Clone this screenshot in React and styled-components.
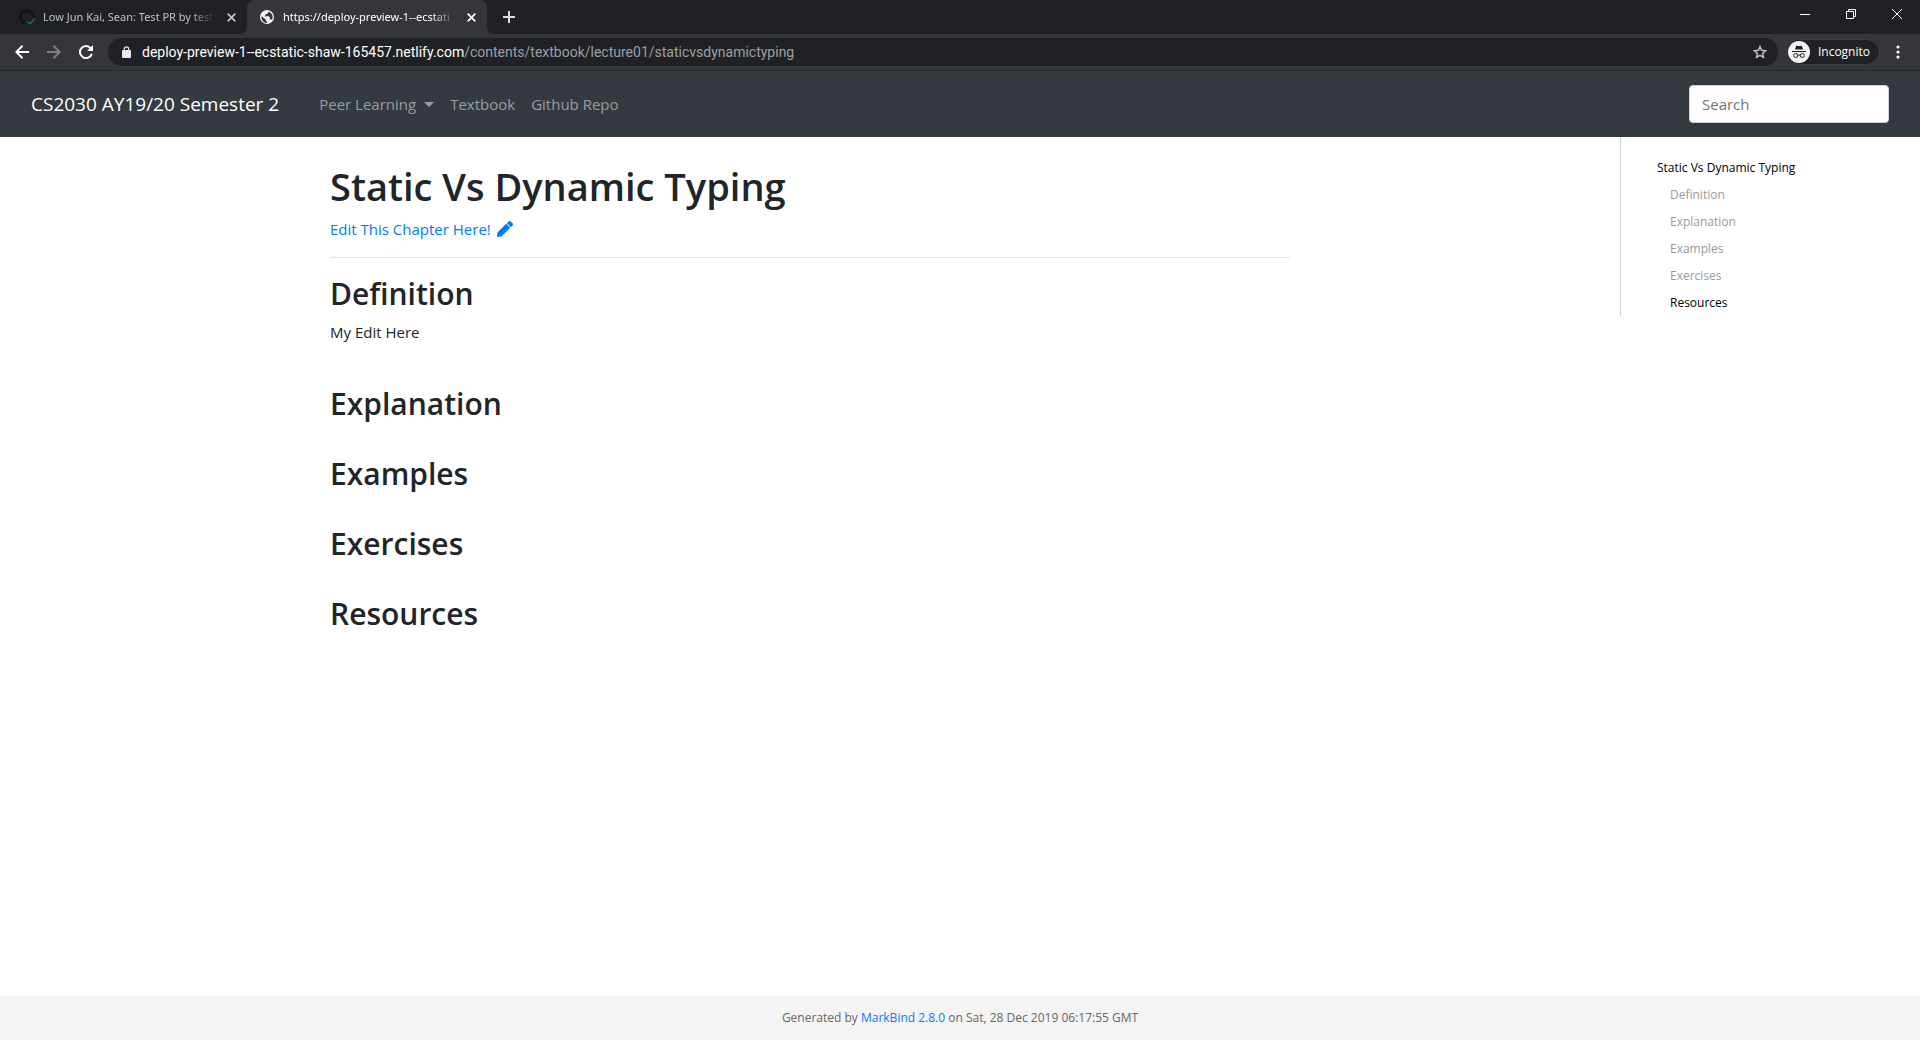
import React from "react";
import styled, { createGlobalStyle, css } from "styled-components";

const Global = createGlobalStyle`
  *, *::before, *::after { box-sizing: border-box; }
  body {
    margin: 0;
    background: #fff;
    color: #212529;
    font: 400 15px/24px "Open Sans", "Noto Sans", sans-serif;
  }
  button, input { font: inherit; }
  a { color: #007bff; text-decoration: none; }
  h1, h2, p, ul { margin: 0; padding: 0; }
`;

const Screen = styled.div`
  min-height: 100vh;
  display: flex;
  flex-direction: column;
`;

/* browser window */
const TabStrip = styled.div`
  display: flex;
  height: 34px;
  padding-left: 7px;
  background: #202124;
`;

const activeTab = css`
  position: relative;
  background: #35363a;
  color: #fff;

  /* the feet that curve out into the toolbar */
  &::before, &::after {
    content: "";
    position: absolute;
    bottom: 0;
    width: 8px;
    height: 8px;
  }
  &::before {
    right: 100%;
    background: radial-gradient(circle at 0 0, #202124 8px, #35363a 8px);
  }
  &::after {
    left: 100%;
    background: radial-gradient(circle at 100% 0, #202124 8px, #35363a 8px);
  }
`;

const Tab = styled.div`
  display: flex;
  align-items: center;
  gap: 8px;
  width: 240px;
  padding: 0 8px 0 12px;
  border-radius: 8px 8px 0 0;
  color: #bdc1c6;
  ${(p) => p.$active && activeTab}
`;

const TabTitle = styled.span`
  flex: 1;
  white-space: nowrap;
  font-family: "Noto Sans", sans-serif;
  font-size: 11px;
  line-height: 16px;
  mask-image: linear-gradient(to right, #000 calc(100% - 24px), transparent);
`;

const IconButton = styled.button`
  display: flex;
  align-items: center;
  justify-content: center;
  width: ${(p) => p.$w || 32}px;
  padding: 0;
  border: 0;
  background: transparent;
  color: ${(p) => p.$color || "#fff"};
`;

const WindowControls = styled.div`
  display: flex;
  align-items: stretch;
  height: 28px;
  margin-left: auto;
`;

const Toolbar = styled.div`
  display: flex;
  align-items: center;
  height: 37px;
  padding: 0 6px;
  background: #35363a;
  border-bottom: 1px solid #27282b;
`;

const AddressBar = styled.div`
  flex: 1;
  display: flex;
  align-items: center;
  gap: 11px;
  height: 28px;
  margin: 0 8px 0 6px;
  padding: 0 9px 0 14px;
  border-radius: 14px;
  background: #202124;
`;

const Url = styled.span`
  flex: 1;
  font-family: Roboto, "Noto Sans", sans-serif;
  font-size: 14px;
  line-height: 20px;
  color: #9aa0a6;
  white-space: nowrap;
`;

const Host = styled.span`
  color: #fff;
`;

const Profile = styled.button`
  display: flex;
  align-items: center;
  gap: 8px;
  height: 26px;
  margin-right: 2px;
  padding: 0 9px 0 1px;
  border: 1px solid #3c4043;
  border-radius: 13px;
  background: #202124;
  color: #fff;
  font-size: 12px;
  line-height: 16px;
`;

/* site */
const Navbar = styled.nav`
  display: flex;
  align-items: center;
  height: 66px;
  padding: 0 31px;
  background: #343a40;
`;

const Brand = styled.a`
  margin-right: 32px;
  color: #fff;
  font-size: 19px;
  line-height: 30px;
`;

const NavList = styled.ul`
  display: flex;
  list-style: none;
`;

const navItem = css`
  display: flex;
  align-items: center;
  gap: 8px;
  padding: 8px;
  border: 0;
  background: transparent;
  color: #999c9f;
  line-height: 24px;
`;

const NavLink = styled.a`${navItem}`;
const NavMenu = styled.button`${navItem}`;

const Search = styled.input`
  width: 200px;
  height: 38px;
  margin-left: auto;
  padding: 6px 12px;
  border: 1px solid #ced4da;
  border-radius: 4px;
  background: #fff;
  &::placeholder { color: #6c757d; opacity: 1; }
`;

const Body = styled.div`
  flex: 1;
  display: flex;
  align-items: flex-start;
`;

const Main = styled.main`
  flex: 1;
  display: flex;
  justify-content: center;
  padding: 24px 0;
`;

const Article = styled.article`
  width: 100%;
  max-width: 960px;
`;

const Title = styled.h1`
  margin-bottom: 6px;
  font-size: 38px;
  line-height: 50px;
  font-weight: 600;
`;

const EditLink = styled.a`
  display: inline-flex;
  align-items: center;
  gap: 6px;
  vertical-align: top;
`;

const Rule = styled.hr`
  margin: 16px 0;
  border: 0;
  border-top: 1px solid #e5e5e5;
`;

const Section = styled.section`
  min-height: ${(p) => (p.$filled ? 110 : 70)}px;
`;

const Heading = styled.h2`
  margin-bottom: 6px;
  font-size: 30px;
  line-height: 40px;
  font-weight: 600;
`;

const PageNav = styled.nav`
  display: flex;
  flex-direction: column;
  width: 300px;
  padding: 17px 0 0 36px;
  border-left: 1px solid #ced4da;
`;

const PageNavLink = styled.a`
  padding: 4px 0 4px ${(p) => (p.$child ? 13 : 0)}px;
  color: ${(p) => (p.$on ? "#000" : "#999")};
  font-size: 12px;
  line-height: 19px;
`;

const Footer = styled.footer`
  padding: 12px 0;
  background: #f4f4f4;
  color: #666;
  font-size: 12px;
  line-height: 20px;
  text-align: center;
`;

const Close = () => (
  <svg width="9" height="9" viewBox="0 0 9 9" stroke="currentColor" strokeWidth="1.700" fill="none">
    <path d="M.7 .7l7.600 7.600M8.300 .7L.7 8.300" />
  </svg>
);

const sections = ["Definition", "Explanation", "Examples", "Exercises", "Resources"];

export default function App() {
  return (
    <Screen>
      <Global />
      <header>
        <TabStrip>
          <Tab>
            <svg width="16" height="16" viewBox="0 0 16 16">
              <path fill="#111315" d="M8 0C3.6 0 0 3.6 0 8c0 3.500 2.300 6.500 5.500 7.600v-2.200c-1.800.3-2.300-1-2.700-1.500 1.200 0 1.300 1.100 2.700.8.1-.5.3-.8.6-1C3.800 11.200 3 9.700 3 7.800c0-1 .3-1.700.8-2.300-.2-.8-.1-1.500.2-2.100.8 0 1.400.4 2 .8a8 8 0 0 1 4 0c.6-.4 1.200-.8 2-.8.3.6.4 1.300.2 2.100.5.600.8 1.300.8 2.300L16 8c0-4.400-3.600-8-8-8z" />
              <path fill="none" stroke="#0f8a35" strokeWidth="1.200" d="M8.500 12.500l2.300 2.300L15.500 10" />
            </svg>
            <TabTitle>Low Jun Kai, Sean: Test PR by test</TabTitle>
            <IconButton $w={16} $color="#bdc1c6" aria-label="Close tab"><Close /></IconButton>
          </Tab>
          <Tab $active>
            <svg width="16" height="16" viewBox="0 0 16 16">
              <circle cx="8" cy="8" r="7" fill="#f1f3f4" />
              <path fill="#35363a" d="M2.600 7.200L7 10.800v1.100l1 .8v1.300C4.800 13.900 2.400 11.300 2.400 8zM9.300 2.500v1.300L8 5.100H6.500v1.500L5.200 7.300h4.600l1 1v1.900h1.300l.8.700A5.800 5.800 0 0 0 9.300 2.500z" />
            </svg>
            <TabTitle>https://deploy-preview-1--ecstati</TabTitle>
            <IconButton $w={16} aria-label="Close tab"><Close /></IconButton>
          </Tab>
          <IconButton $w={44} $color="#dadce0" aria-label="New tab">
            <svg width="12" height="12" viewBox="0 0 12 12" stroke="currentColor" strokeWidth="2"><path d="M6 0v12M0 6h12" /></svg>
          </IconButton>
          <WindowControls>
            <IconButton $w={46} aria-label="Minimize">
              <svg width="10" height="10" viewBox="0 0 10 10" stroke="currentColor"><path d="M0 5.500h10" /></svg>
            </IconButton>
            <IconButton $w={46} aria-label="Restore">
              <svg width="10" height="10" viewBox="0 0 10 10" stroke="currentColor" fill="none"><path d="M.5 2.500h7v7h-7zM2.500 2.500v-2h7v7h-2" /></svg>
            </IconButton>
            <IconButton $w={46} aria-label="Close">
              <svg width="10" height="10" viewBox="0 0 10 10" stroke="currentColor"><path d="M0 0l10 10M10 0L0 10" /></svg>
            </IconButton>
          </WindowControls>
        </TabStrip>
        <Toolbar>
          <IconButton aria-label="Back">
            <svg width="14" height="14" viewBox="0 0 14 14" stroke="currentColor" strokeWidth="2" fill="none"><path d="M14 7H1.500M7.500 .8L1.300 7l6.200 6.200" /></svg>
          </IconButton>
          <IconButton $color="#7e8083" aria-label="Forward">
            <svg width="14" height="14" viewBox="0 0 14 14" stroke="currentColor" strokeWidth="2" fill="none"><path d="M0 7h12.500M6.500 .8L12.700 7l-6.200 6.200" /></svg>
          </IconButton>
          <IconButton aria-label="Reload">
            <svg width="14" height="14" viewBox="0 0 14 14" fill="none"><path stroke="currentColor" strokeWidth="2" d="M11.700 3.300A6 6 0 1 0 12.800 8.700" /><path fill="currentColor" d="M14 0v6H8z" /></svg>
          </IconButton>
          <AddressBar>
            <svg width="9" height="12" viewBox="0 0 9 12"><path fill="none" stroke="#e8eaed" strokeWidth="1.200" d="M2.300 5V3a2.200 2.200 0 0 1 4.400 0v2" /><rect y="4" width="9" height="8" rx="1" fill="#e8eaed" /></svg>
            <Url><Host>deploy-preview-1--ecstatic-shaw-165457.netlify.com</Host>/contents/textbook/lecture01/staticvsdynamictyping</Url>
            <IconButton $w={18} $color="#c4c7ca" aria-label="Bookmark">
              <svg width="14" height="14" viewBox="0 0 14 14" fill="none" stroke="currentColor" strokeWidth="1.400"><path d="M7 1.600l1.600 3.700 4 .4-3 2.700.9 4L7 10.300l-3.500 2.100.9-4-3-2.700 4-.4z" /></svg>
            </IconButton>
          </AddressBar>
          <Profile>
            <svg width="22" height="22" viewBox="0 0 22 22">
              <circle cx="11" cy="11" r="11" fill="#f1f3f4" />
              <path fill="#202124" d="M7 8.500l1.300-4 1.500.5h2.400l1.500-.5 1.300 4zM4 10h14v1H4z" />
              <g fill="none" stroke="#202124"><circle cx="7.700" cy="14.500" r="2" /><circle cx="14.300" cy="14.500" r="2" /><path d="M9.700 14.300q1.300-.8 2.600 0" /></g>
            </svg>
            Incognito
          </Profile>
          <IconButton aria-label="Menu">
            <svg width="4" height="14" viewBox="0 0 4 14" fill="currentColor"><circle cx="2" cy="2" r="1.600" /><circle cx="2" cy="7" r="1.600" /><circle cx="2" cy="12" r="1.600" /></svg>
          </IconButton>
        </Toolbar>
      </header>
      <Navbar>
        <Brand href="#">CS2030 AY19/20 Semester 2</Brand>
        <NavList>
          <li>
            <NavMenu>
              Peer Learning
              <svg width="10" height="5" viewBox="0 0 10 5" fill="currentColor"><path d="M0 0h10L5 5z" /></svg>
            </NavMenu>
          </li>
          <li><NavLink href="#">Textbook</NavLink></li>
          <li><NavLink href="#">Github Repo</NavLink></li>
        </NavList>
        <Search type="text" placeholder="Search" aria-label="Search" />
      </Navbar>
      <Body>
        <Main>
          <Article>
            <Title>Static Vs Dynamic Typing</Title>
            <EditLink href="#">
              Edit This Chapter Here!
              <svg width="16" height="16" viewBox="0 0 512 512" fill="currentColor"><path d="M497.900 142.100l-46.100 46.100c-4.700 4.700-12.300 4.700-17 0l-111-111c-4.700-4.700-4.700-12.300 0-17l46.100-46.100c18.700-18.700 49.100-18.700 67.900 0l60.100 60.100c18.800 18.700 18.800 49.100 0 67.900zM284.200 99.800L21.600 362.400.4 483.900c-2.900 16.400 11.400 30.600 27.800 27.800l121.500-21.300 262.600-262.600c4.700-4.700 4.700-12.300 0-17l-111-111c-4.800-4.700-12.400-4.700-17.100 0z" /></svg>
            </EditLink>
            <Rule />
            {sections.map((name) => (
              <Section key={name} id={name.toLowerCase()} $filled={name === "Definition"}>
                <Heading>{name}</Heading>
                {name === "Definition" && <p>My Edit Here</p>}
              </Section>
            ))}
          </Article>
        </Main>
        <PageNav aria-label="On this page">
          <PageNavLink href="#" $on>Static Vs Dynamic Typing</PageNavLink>
          {sections.map((name) => (
            <PageNavLink key={name} href={"#" + name.toLowerCase()} $child $on={name === "Resources"}>{name}</PageNavLink>
          ))}
        </PageNav>
      </Body>
      <Footer>
        Generated by <a href="#">MarkBind 2.8.0</a> on Sat, 28 Dec 2019 06:17:55 GMT
      </Footer>
    </Screen>
  );
}
